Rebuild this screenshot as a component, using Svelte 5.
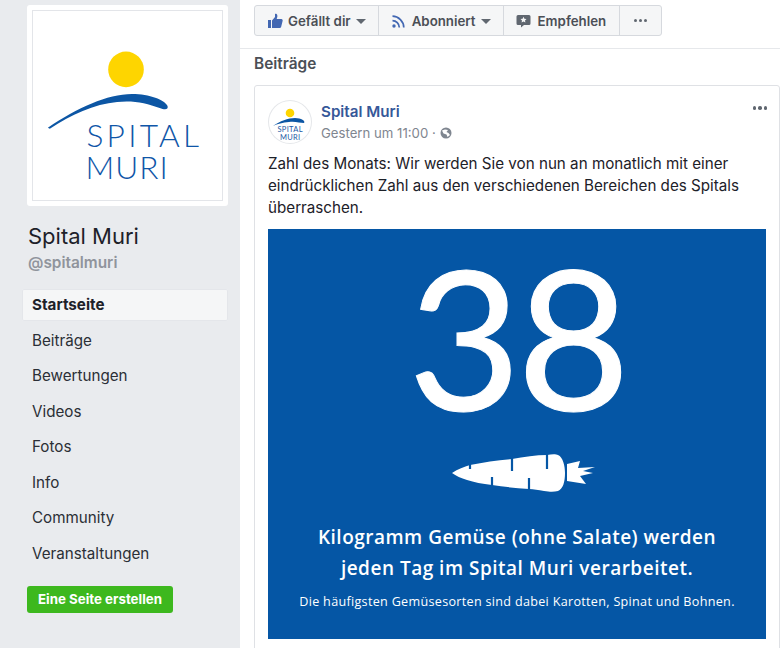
<script>
  const menu = ['Startseite', 'Beiträge', 'Bewertungen', 'Videos', 'Fotos', 'Info', 'Community', 'Veranstaltungen'];
</script>

<div class="page">
  <aside class="sidebar">
    <div class="logo-box">
      <div class="logo-inner">
        <svg viewBox="0 0 190 190" width="188" height="188">
          <circle cx="94" cy="59" r="18" fill="#fed500" />
          <path d="M15 118 C45 98 75 84 100 84 C118 84 133 90 136 96 C137 100 133 100 128 98 C115 93 100 90 85 92 C62 94 38 105 17 119 Z" fill="#0c56a4" />
          <text class="logo-text"><tspan x="54" y="137" class="spital">SPITAL</tspan><tspan x="53" y="170" class="muri">MURI</tspan></text>
        </svg>
      </div>
    </div>
    <h1>Spital Muri</h1>
    <div class="handle">@spitalmuri</div>
    <nav>
      {#each menu as item, i}
        <div class="nav-item" class:active={i === 0}>{item}</div>
      {/each}
    </nav>
    <button class="create">Eine Seite erstellen</button>
  </aside>

  <main>
    <div class="actions-wrap">
      <div class="actions">
        <div class="btn">
          <svg width="16" height="16" viewBox="0 0 16 16"><path d="M1 7h3v8H1z M5 7.500 8 4V1.200c0-.6 1.900-.6 2.300 1 .3 1.200-.2 2.600-.6 3.800h4.600c1.200 0 1.600 1 1.300 2l-1.500 6c-.2.700-.7 1-1.400 1H5z" fill="#4267b2" /></svg>
          <span>Gefällt dir</span><i class="caret"></i>
        </div>
        <div class="btn">
          <svg width="16" height="16" viewBox="0 0 16 16" fill="none" stroke="#4267b2" stroke-width="1.700"><path d="M1.500 3.200c6 0 11.300 5.300 11.300 11.300" /><path d="M1.500 7.700c3.700 0 6.800 3.100 6.800 6.800" /><circle cx="3" cy="13" r="1.700" fill="#4267b2" stroke="none" /></svg>
          <span>Abonniert</span><i class="caret"></i>
        </div>
        <div class="btn recommend">
          <svg width="15" height="15" viewBox="0 0 15 15"><path fill-rule="evenodd" d="M2 2h11a1.500 1.500 0 0 1 1.500 1.500v7A1.500 1.500 0 0 1 13 12H8l-3 2.500V12H2A1.500 1.500 0 0 1 .5 10.500v-7A1.500 1.500 0 0 1 2 2zM7.500 3.800l-.9 1.900-2.100.3 1.500 1.400-.4 2.100 1.900-1 1.900 1-.4-2.100L10.500 6l-2.100-.3z" fill="#606770" /></svg>
          <span>Empfehlen</span>
        </div>
        <div class="btn more"><i></i><i></i><i></i></div>
      </div>
    </div>
    <h2>Beiträge</h2>

    <article>
      <header>
        <div class="avatar">
          <svg viewBox="0 0 44 44" width="44" height="44">
            <circle cx="22" cy="13" r="4.300" fill="#fed500" />
            <path d="M5 26 C12 21 20 18 27 18 C33 18 38 21 36 23 C32 23 27 21 21 22 C15 22.500 9 24 5 26Z" fill="#0c56a4" />
            <text class="avatar-text"><tspan x="9.500" y="32">SPITAL</tspan><tspan x="12" y="39.500">MURI</tspan></text>
          </svg>
        </div>
        <div class="meta">
          <div class="author">Spital Muri</div>
          <div class="time">
            Gestern um 11:00 ·
            <svg width="12" height="12" viewBox="0 0 12 12"><circle cx="6" cy="6" r="5.500" fill="#7f8690" /><path d="M2 3.500 5 2.500 8 3 6.500 5 8.500 6 10 8 7.500 10 6.500 7.500 3.500 6.500z" fill="#fff" /></svg>
          </div>
        </div>
        <div class="post-more"><i></i><i></i><i></i></div>
      </header>

      <p>Zahl des Monats: Wir werden Sie von nun an monatlich mit einer eindrücklichen Zahl aus den verschiedenen Bereichen des Spitals überraschen.</p>

      <div class="tile">
        <div class="number">38</div>
        <svg class="carrot" width="144" height="40" viewBox="0 0 144 40">
          <path d="M0 19 C6 15 12 13 18 11 C32 8 46 6 60 5 C72 3 84 1 95 1 C100 0 104 0 106 1 C111 3 113 12 113 19 C113 28 111 35 106 37 C102 38 98 38 92 37 C86 36 82 35 77 35 C64 34 52 33 40 31 C30 30 22 28 15 26 C9 24 4 22 0 19 Z" fill="#fff" />
          <path d="M18 10v5 M60 4v13 M95 0v15 M40 23v9 M77 24v12" stroke="#0556a5" stroke-width="2.200" fill="none" />
          <path d="M115 10 L128 7 L126 14 L143 13 L131 17 L141 19 L128 22 L134 30 L115 27 Z" fill="#fff" />
        </svg>
        <div class="headline">Kilogramm Gemüse (ohne Salate) werden<br />jeden Tag im Spital Muri verarbeitet.</div>
        <div class="subline">Die häufigsten Gemüsesorten sind dabei Karotten, Spinat und Bohnen.</div>
      </div>
    </article>
  </main>
</div>

<style>
  :global(body) {
    margin: 0;
    background: #fff;
  }

  .page {
    display: flex;
    width: 780px;
    height: 648px;
    overflow: hidden;
    font-family: Inter, "Liberation Sans", sans-serif;
    color: #1d2129;
  }

  .sidebar {
    width: 240px;
    flex: none;
    box-sizing: border-box;
    background: #e9ebee;
    padding: 5px 12px 0 22px;
  }

  .logo-box {
    width: 201px;
    height: 201px;
    margin-left: 5px;
    box-sizing: border-box;
    padding: 5px;
    background: #fff;
    border-radius: 3px;
  }

  .logo-inner {
    width: 191px;
    height: 191px;
    box-sizing: border-box;
    border: 1px solid #e3e5e9;
    overflow: hidden;
  }

  .logo-text {
    font-family: Lato, sans-serif;
    font-weight: 300;
    font-size: 32px;
    fill: #0f56a8;
  }

  .spital {
    letter-spacing: 3.300px;
  }

  .muri {
    letter-spacing: 1px;
  }

  h1 {
    margin: 16px 0 0 6px;
    font-size: 22px;
    line-height: 28px;
    font-weight: 400;
  }

  .handle {
    margin: 3px 0 0 6px;
    font-size: 15.400px;
    line-height: 20px;
    font-weight: 600;
    color: #90949c;
  }

  nav {
    margin-top: 16px;
    width: 206px;
  }

  .nav-item {
    height: 32px;
    margin-bottom: 3.500px;
    padding-left: 10px;
    line-height: 32px;
    font-size: 15.200px;
    color: #2b2f36;
    box-sizing: border-box;
  }

  .nav-item.active {
    background: #f5f6f7;
    font-weight: 700;
    color: #1d2129;
    border-radius: 2px;
    box-shadow: 0 0 0 1px #e4e6ea inset;
  }

  .create {
    display: block;
    margin: 16px 0 0 5px;
    width: 146px;
    height: 27px;
    border: none;
    border-radius: 3px;
    background: #3db81e;
    color: #fff;
    font-family: inherit;
    font-size: 13.300px;
    font-weight: 700;
    padding: 0;
  }

  main {
    flex: 1;
    min-width: 0;
    background: #fff;
  }

  .actions-wrap {
    height: 49px;
    box-sizing: border-box;
    padding: 5px 0 0 14px;
    border-bottom: 1px solid #e6e8eb;
  }

  .actions {
    display: inline-flex;
    height: 31px;
    box-sizing: border-box;
    border: 1px solid #d6d9de;
    border-radius: 3px;
    background: #f5f6f7;
  }

  .btn {
    display: flex;
    align-items: center;
    gap: 5px;
    padding: 0 12px;
    font-size: 13.300px;
    font-weight: 600;
    color: #4b4f56;
    border-right: 1px solid #d6d9de;
  }

  .btn:last-child {
    border-right: none;
  }

  .btn.recommend {
    gap: 7px;
    padding-right: 13px;
  }

  .caret {
    width: 0;
    height: 0;
    margin: 2px 0 0 0;
    border-left: 5px solid transparent;
    border-right: 5px solid transparent;
    border-top: 5px solid #606770;
  }

  .btn.more {
    gap: 2px;
    padding: 0 14px;
  }

  .more i,
  .post-more i {
    display: block;
    width: 3px;
    height: 3px;
    border-radius: 50%;
    background: #606770;
  }

  h2 {
    margin: 5px 0 0 14px;
    font-size: 15.400px;
    line-height: 20px;
    font-weight: 600;
    color: #4b4f56;
  }

  article {
    margin: 11px 0 0 14px;
    padding: 14px 13px 0 13px;
    height: 600px;
    box-sizing: border-box;
    border: 1px solid #dfe1e5;
    border-radius: 3px 3px 0 0;
  }

  header {
    display: flex;
    gap: 9px;
    position: relative;
  }

  .avatar {
    width: 44px;
    height: 44px;
    flex: none;
    border-radius: 50%;
    box-shadow: 0 0 0 1px #e5e7ea inset;
    overflow: hidden;
  }

  .avatar-text {
    font-family: Lato, sans-serif;
    font-size: 7.500px;
    letter-spacing: 0.300px;
    fill: #1d5aa5;
  }

  .meta {
    padding-top: 2px;
  }

  .author {
    font-size: 15.200px;
    line-height: 20px;
    font-weight: 600;
    color: #365899;
  }

  .time {
    display: flex;
    align-items: center;
    gap: 4px;
    margin-top: 2px;
    font-size: 13.200px;
    line-height: 18px;
    color: #7f8690;
  }

  .post-more {
    position: absolute;
    top: 6px;
    right: -1px;
    display: flex;
    gap: 2px;
  }

  .post-more i {
    width: 3.500px;
    height: 3.500px;
  }

  p {
    margin: 9px 0 0;
    font-size: 15.200px;
    line-height: 22px;
    color: #1d2129;
  }

  .tile {
    margin-top: 10px;
    width: 498px;
    height: 410px;
    background: #0556a5;
    color: #fff;
    text-align: center;
    font-family: "Open Sans", sans-serif;
  }

  .number {
    height: 212px;
    font-family: Lato, sans-serif;
    font-size: 195px;
    line-height: 212px;
    font-weight: 400;
    letter-spacing: -4px;
    -webkit-text-stroke: 1px #fff;
  }

  .carrot {
    display: block;
    margin: 13px auto 0 184px;
  }

  .headline {
    margin-top: 28px;
    font-size: 19px;
    line-height: 31px;
    font-weight: 600;
    letter-spacing: 0.500px;
  }

  .subline {
    margin-top: 9px;
    font-size: 12.600px;
    line-height: 18px;
    letter-spacing: 0.300px;
  }
</style>
